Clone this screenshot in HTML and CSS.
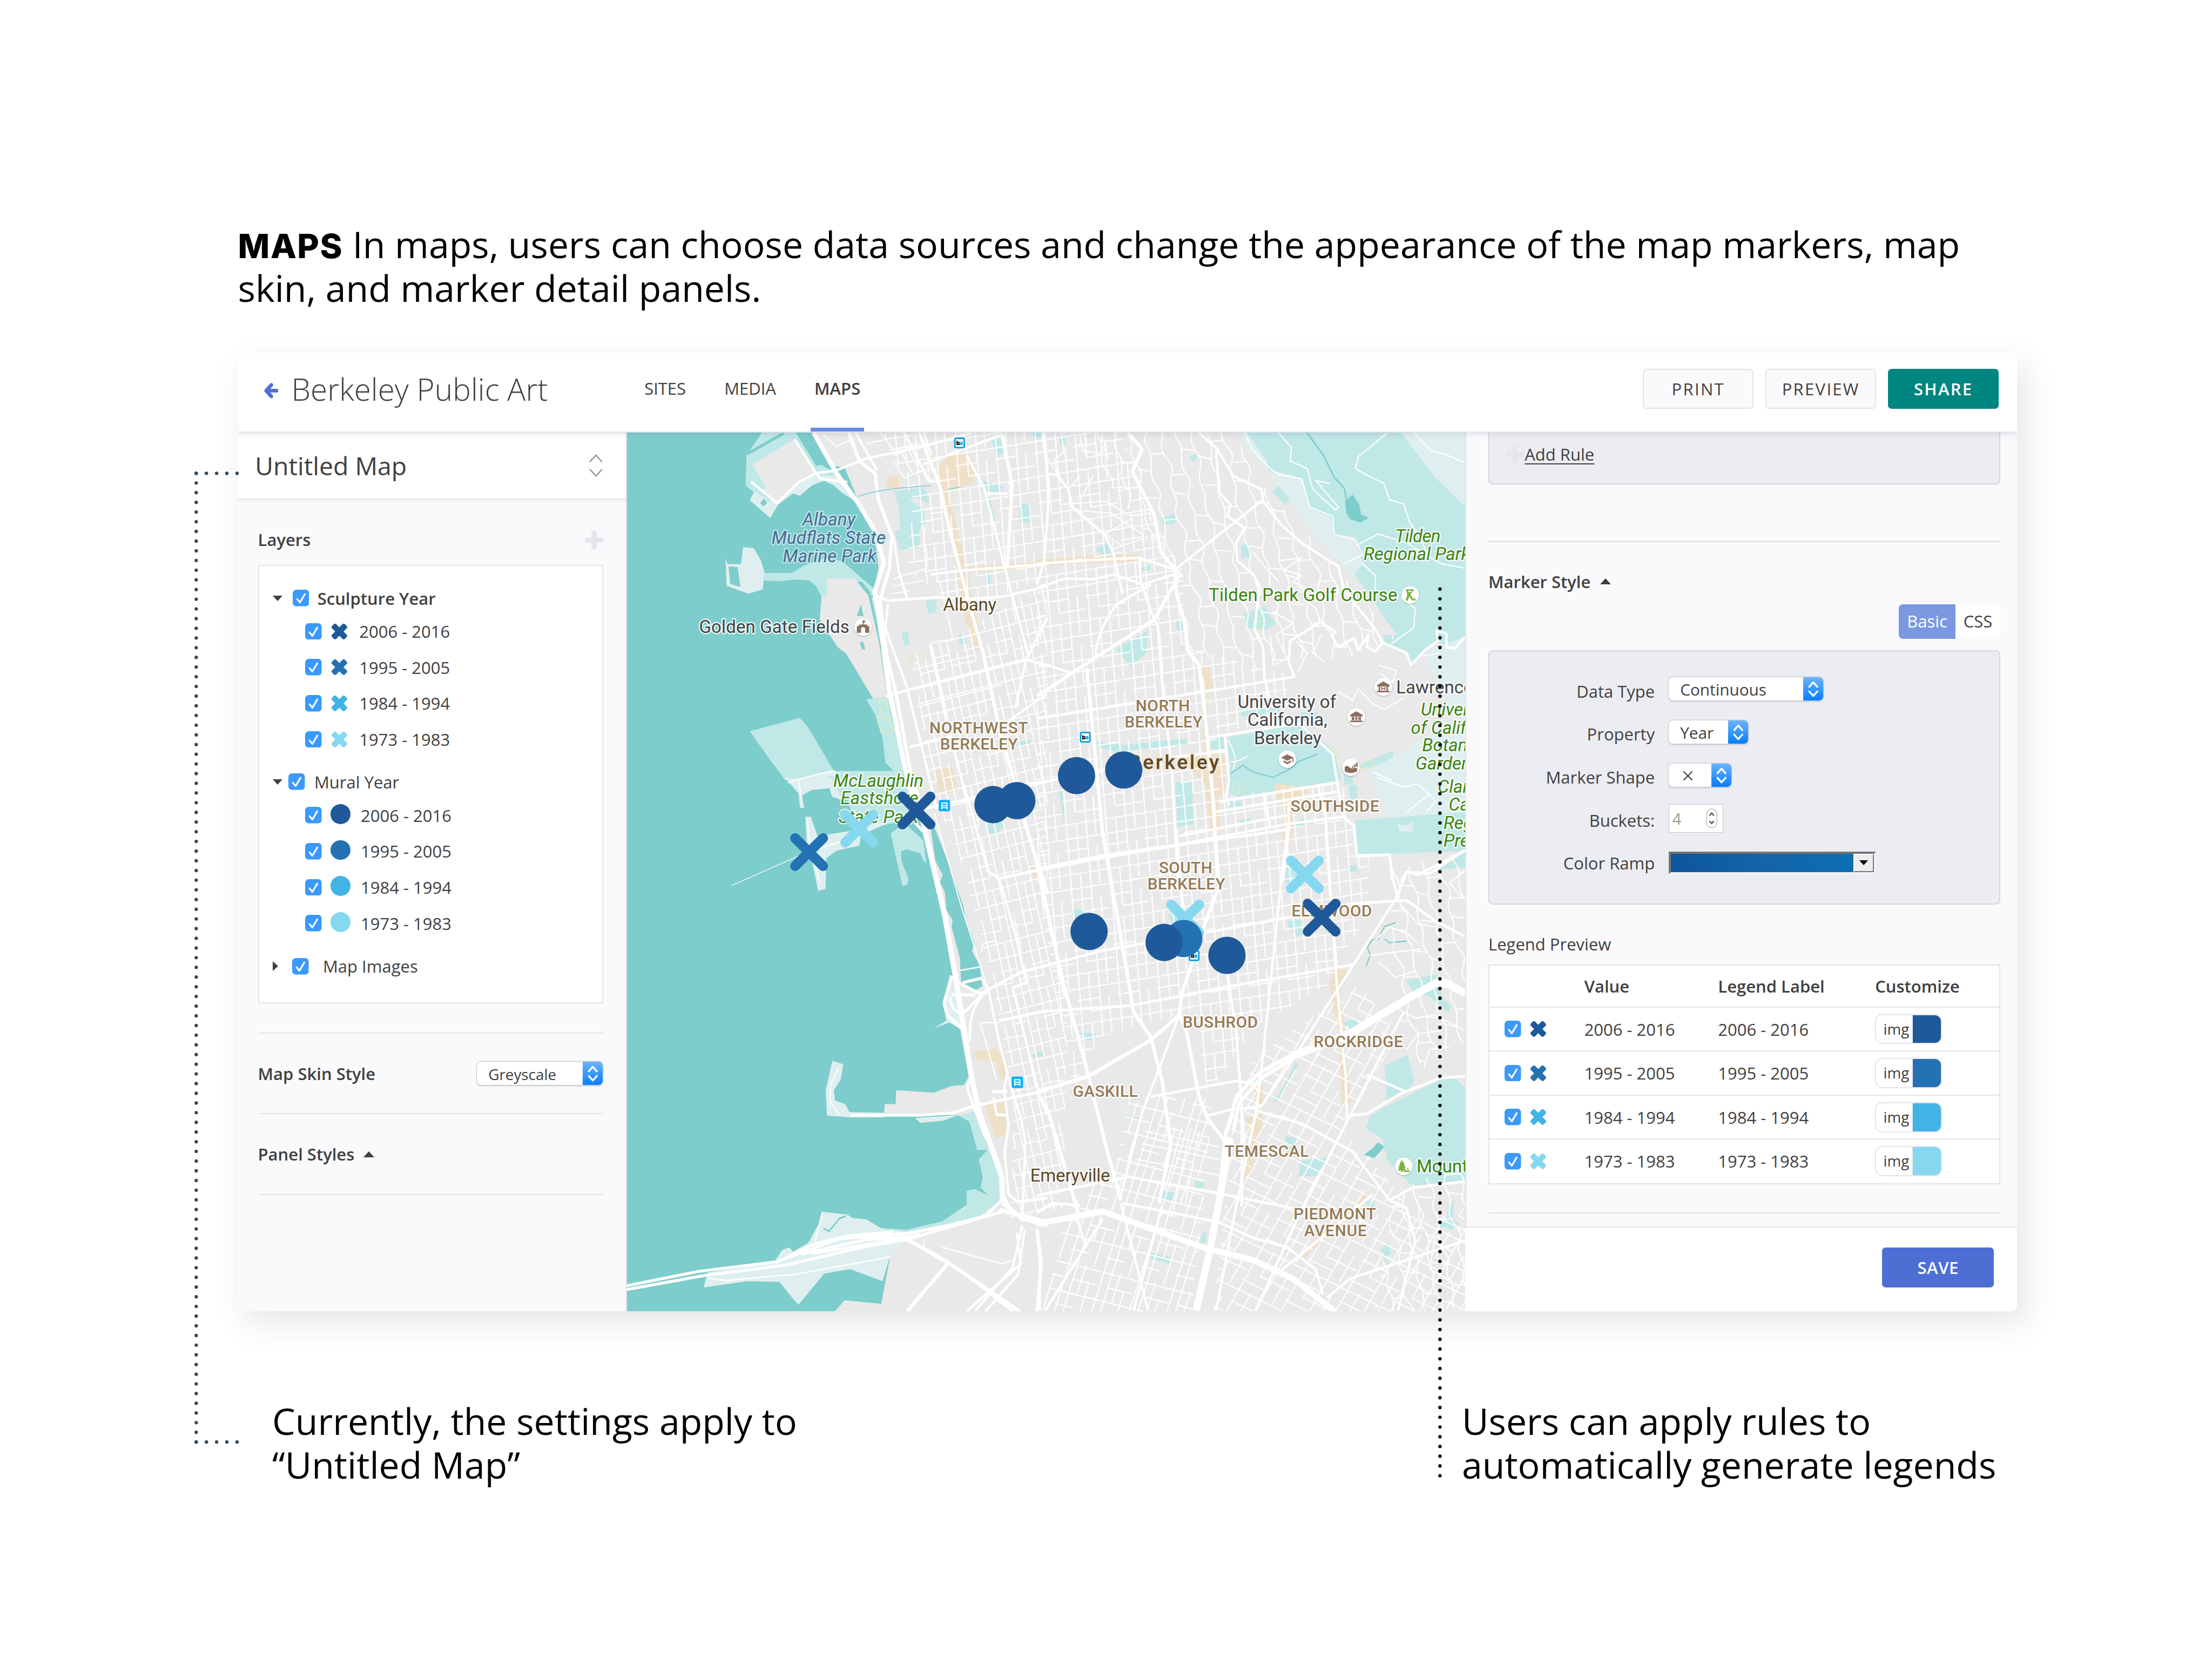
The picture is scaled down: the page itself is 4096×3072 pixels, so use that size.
FILE: index.html
```html
<!DOCTYPE html>
<html lang="en">
<head>
<meta charset="utf-8">
<title>Berkeley Public Art – Maps</title>
<link rel="stylesheet" href="styles.css">
</head>
<body>
<svg class="defs" width="0" height="0" aria-hidden="true">
  <symbol id="check" viewBox="0 0 32 32"><rect width="32" height="32" rx="7" fill="#3b99fc"/><path d="M8.500 18l5.500 6.500L23.500 8.500" fill="none" stroke="#fff" stroke-width="3.300" stroke-linecap="round" stroke-linejoin="round"/></symbol>
  <symbol id="cross" viewBox="0 0 30 30"><g transform="rotate(45 15 15)"><rect x="-2.500" y="9.300" width="35" height="11.400" rx="2.500"/><rect x="9.300" y="-2.500" width="11.400" height="35" rx="2.500"/></g></symbol>
  <symbol id="plus" viewBox="0 0 36 36"><rect y="13" width="36" height="10" rx="3"/><rect x="13" width="10" height="36" rx="3"/></symbol>
  <symbol id="updown" viewBox="0 0 40 46"><path d="M12 19l8-9 8 9M12 28l8 9 8-9" fill="none" stroke="#fff" stroke-width="3.600" stroke-linecap="round" stroke-linejoin="round"/></symbol>
</svg>
<div class="page">
  <p class="intro"><b>MAPS</b> In maps, users can choose data sources and change the appearance of the map markers, map<br>skin, and marker detail panels.</p>

  <div class="window">
    <header class="topbar">
      <svg class="back" viewBox="0 0 28 30"><path d="M14 4L4 15l10 11M5 15h20" fill="none" stroke="#4b6fd6" stroke-width="7" stroke-linecap="round" stroke-linejoin="round"/></svg>
      <h1>Berkeley Public Art</h1>
      <nav class="tabs">
        <a>SITES</a><a>MEDIA</a><a class="active">MAPS</a>
      </nav>
      <div class="actions">
        <button class="btn">PRINT</button><button class="btn">PREVIEW</button><button class="btn share">SHARE</button>
      </div>
    </header>

    <div class="body">
      <aside class="left">
        <div class="map-title"><span>Untitled Map</span>
          <svg viewBox="0 0 28 44"><path d="M2 15L14 2l12 13M2 29l12 13 12-13" fill="none" stroke="#9a9a9e" stroke-width="2.600"/></svg>
        </div>
        <div class="left-in">
          <div class="layers-head"><b>Layers</b><svg class="plus"><use href="#plus"/></svg></div>
          <div class="tree">
            <div class="node first"><i class="down"></i><svg class="ck"><use href="#check"/></svg><b>Sculpture Year</b></div>
            <div class="leaf"><svg class="ck"><use href="#check"/></svg><svg class="x c1"><use href="#cross"/></svg><span>2006 - 2016</span></div>
            <div class="leaf"><svg class="ck"><use href="#check"/></svg><svg class="x c2"><use href="#cross"/></svg><span>1995 - 2005</span></div>
            <div class="leaf"><svg class="ck"><use href="#check"/></svg><svg class="x c3"><use href="#cross"/></svg><span>1984 - 1994</span></div>
            <div class="leaf"><svg class="ck"><use href="#check"/></svg><svg class="x c4"><use href="#cross"/></svg><span>1973 - 1983</span></div>
            <div class="node mural"><i class="down"></i><svg class="ck"><use href="#check"/></svg><span>Mural Year</span></div>
            <div class="leaf"><svg class="ck"><use href="#check"/></svg><em class="dot d1"></em><span>2006 - 2016</span></div>
            <div class="leaf"><svg class="ck"><use href="#check"/></svg><em class="dot d2"></em><span>1995 - 2005</span></div>
            <div class="leaf"><svg class="ck"><use href="#check"/></svg><em class="dot d3"></em><span>1984 - 1994</span></div>
            <div class="leaf"><svg class="ck"><use href="#check"/></svg><em class="dot d4"></em><span>1973 - 1983</span></div>
            <div class="node images"><i class="right-caret"></i><svg class="ck"><use href="#check"/></svg><span>Map Images</span></div>
          </div>
          <div class="setting skin"><b>Map Skin Style</b><div class="select grey"><span>Greyscale</span><svg><use href="#updown"/></svg></div></div>
          <div class="setting"><b>Panel Styles</b><i class="up"></i></div>
          <div class="rule"></div>
        </div>
      </aside>

      <main class="map">
        <svg viewBox="1209 834 1617 1695" preserveAspectRatio="none">
          <defs>
            <pattern id="g1" width="62" height="104" patternUnits="userSpaceOnUse" patternTransform="matrix(.97 -.25 .21 .97 0 0)"><path d="M4 0V104M19 0V52M19 78V104M33 0V104M48 26V104M0 3H62M0 29H33M33 52H62M0 78H62M0 54H20"/></pattern>
            <pattern id="g2" width="76" height="96" patternUnits="userSpaceOnUse" patternTransform="matrix(1 -.16 .08 1 0 0)"><path d="M5 0V96M24 0V50M24 72V96M43 0V96M60 24V96M0 4H76M0 26H43M24 50H76M0 72H76"/></pattern>
            <pattern id="g3" width="70" height="110" patternUnits="userSpaceOnUse" patternTransform="matrix(.96 .24 -.3 .95 0 0)"><path d="M4 0V110M20 0V110M36 0V60M52 30V110M0 5H70M0 60H70M20 32H70M0 86H36"/></pattern>
            <pattern id="g4" width="96" height="90" patternUnits="userSpaceOnUse" patternTransform="matrix(.86 .42 -.5 .88 0 0)"><path d="M5 0V90M30 0V54M55 0V90M78 30V90M0 5H96M0 30H55M30 54H96M0 74H55"/></pattern>
            <pattern id="g5" width="118" height="130" patternUnits="userSpaceOnUse" patternTransform="rotate(-12)"><path d="M8 0C-4 30 30 40 14 66S22 104 8 130M38 0C52 24 28 44 42 70S30 100 38 130M66 0C58 30 84 36 70 66S76 110 66 130M96 0C110 30 84 50 98 78S90 110 96 130M14 66L42 70M70 40L96 52M42 20L66 28M70 96L96 104M38 110L10 100M0 20L8 22M98 18L118 20"/></pattern>
            <clipPath id="mapclip"><rect x="1209" y="834" width="1617" height="1695"/></clipPath>
          </defs>
          <g clip-path="url(#mapclip)">
          <rect class="land" x="1209" y="834" width="1617" height="1695"/>

          <!-- water and shore, north-west -->
          <g transform="translate(1200 660) scale(.52296 .57398)">
            <path class="water" d="M0 300H640L700 303 775 415 820 420 865 520 915 600 938 700 945 760 925 845 955 1040 975 1190 1010 1300 1040 1440 1085 1600H0Z"/>
            <path class="park" d="M515 303H640L715 415 735 412 790 440 820 470 865 530 810 505 780 480 745 465 700 480 655 515 630 508 575 545 545 590 470 530 485 505 455 480 458 380Z"/>
            <path class="pale" d="M790 450L870 540 810 505 780 480 745 465 700 480 655 515 630 508 575 545 545 590 470 530 490 500 540 535 640 480 715 445Z"/>
            <path class="land" d="M635 325L715 440 650 470 570 540 515 495 530 490 480 410Z"/>
            <path d="M595 306L460 375" stroke="#7dcdcc" stroke-width="10" fill="none"/>
            <path class="water" d="M640 303H705L770 405 765 415 730 412Z M508 540l14-15 13 14-14 13Z"/>
            <path class="pale" d="M445 688L485 692 510 730 525 775 518 830 465 845 385 818 380 725 388 745 438 745Z"/>
            <path class="water" d="M392 753L425 755 436 822 398 812Z"/>
            <path class="park" d="M524 775H625L670 750 750 725 810 735 850 765 880 790 925 825 925 850 755 870 735 855 715 820 690 800 640 797 580 803 518 800Z"/>
            <path class="land" d="M755 793H860L910 850 925 860 975 1190 925 1197 825 1045 795 1025 770 990 728 930 735 855H755Z"/>
            <path class="water" d="M880 882L890 920H865Z M876 1010L888 1006 896 1032H885Z M905 840L918 850 958 1040 950 1020Z M865 803L885 806 918 842 905 848Z"/>
            <path class="park" d="M900 1200L975 1190 1045 1440 1085 1600H800L780 1440H1000L970 1412 960 1330 935 1255Z"/>
            <path class="park" d="M470 1307L655 1262 683 1290 780 1440 820 1570H660L655 1535 610 1480 550 1410Z"/>
            <path class="pale" d="M610 1480L725 1450 785 1440 830 1570H660L655 1535Z"/>
            <path class="yel" d="M945 1205L972 1195 990 1265 962 1270ZM938 1258L965 1255 975 1270 1005 1305 955 1312ZM1055 1056L1110 1045 1120 1070 1060 1082Z"/>
            <path class="park" d="M1003 500L1110 488 1133 525 1125 540 1080 520 1060 530 1110 560 1118 612 1098 620 1095 690 1022 698 1005 640 1025 625 1020 560ZM1330 465L1403 482 1400 505 1335 500ZM1345 515L1355 520 1378 610 1370 605ZM1465 545H1510V605H1465ZM1360 330L1395 322 1408 370 1385 385ZM1510 303H1548V318H1520ZM1333 770L1352 768 1362 808 1343 812ZM1120 868L1160 864 1155 908 1128 912ZM1030 975L1052 972 1062 1015 1042 1020ZM1240 985L1255 975 1272 1010 1243 1018ZM1455 1345L1505 1335 1510 1352 1460 1365Z"/>
            <path class="sand" d="M1165 415L1210 375 1260 370 1300 405 1298 470 1215 500 1170 490 1160 440ZM977 450H1021V490H977ZM1090 305L1110 303 1155 400 1135 400ZM1175 490L1197 485 1275 780 1320 980 1310 1040 1300 1040 1255 900 1235 770ZM1250 755L1568 735V755L1255 775ZM1150 1440L1215 1430 1235 1490 1170 1515Z"/>
          </g>

          <!-- bay, marina and bridge approach -->
          <g transform="translate(1200 1500) scale(.52296 .66964)">
            <path class="water" d="M0 0H1070L1100 100 1150 250 1225 560 1185 650 1245 720 1278 860 1260 885 1215 888 1150 907 1010 900 1008 940H968L965 970 1240 972 1280 990 1310 1070H1350L1315 1100 1330 1150 1322 1180 1355 1205 1300 1185 1270 1190 1272 1230 1180 1278 1050 1302 920 1296 850 1270 990 1370 955 1515 820 1505 775 1545H0Z"/>
            <path class="water" d="M1135 130L1155 150 1200 240 1258 370 1268 410 1298 475 1290 500 1318 540 1328 600 1295 615 1250 592 1245 520 1215 430 1218 410 1195 380 1190 330 1172 300 1182 280 1155 240Z"/>
            <path class="park" d="M1240 974L1300 960 1400 1150 1395 1215 1320 1262 1050 1318 900 1320 740 1300 850 1270 930 1296 1050 1302 1180 1278 1270 1235V1190L1300 1185 1355 1207 1322 1180 1332 1150 1315 1100 1350 1072H1308L1282 990Z"/>
            <path class="park" d="M760 -5H1070L1100 95 1000 130 870 152 830 62H800L770 50Z"/>
            <path class="pale" d="M590 0H770L810 62 775 55 765 30 700 35 663 50 671 88 655 85 650 45 612 10ZM675 112H695L720 168 840 153 880 140 1010 120 880 165 875 195 790 210 752 232 750 320 722 326 700 240 680 190Z"/>
            <path class="park" d="M990 160L1040 130 1110 180 1122 247 1108 235 1100 218 1050 206 1028 212 1030 240 1055 290 1052 308 1033 311Z"/>
            <path class="pale" d="M1215 575L1255 700 1245 722 1205 705 1148 722 1195 700 1185 650ZM755 973L750 900 775 815 815 825 805 870 780 900 785 930 822 940 838 963 965 965V978H840ZM1080 980L1240 972 1180 988 1100 994Z"/>
            <path class="pale" d="M735 1250L830 1258 850 1268 900 1272 960 1300 1050 1308 1050 1330 990 1370 960 1450 840 1415 745 1428 650 1518 632 1503 580 1452 460 1450 300 1468 315 1425 560 1395 590 1360 615 1353 630 1365 685 1340 725 1285Z"/>
            <path d="M742 1298L763 1306 800 1270 825 1262" stroke="#7dcdcc" stroke-width="5" fill="none"/>
            <path class="sand" d="M1160 0H1215L1235 40 1200 45ZM1295 790L1380 778 1408 815 1415 870 1395 870 1378 820 1310 810ZM1335 945L1410 925 1418 1030 1375 1038ZM1505 258L1535 252V285L1520 290Z"/>
            <path class="park" d="M1345 135L1405 122 1408 138 1380 162 1352 160ZM1510 798L1555 788V800L1515 806Z"/>
          </g>

          <!-- hills and campus -->
          <g transform="translate(2000 800) scale(.54847 .57398)">
            <path class="pale" d="M690 50L900 120 1000 300 1160 500 1120 550 1070 500 1000 430 900 300 800 170Z"/>
            <path class="park" d="M735 55H1505V745L1470 785 1410 765 1365 795 1315 842 1300 800 1225 768 1217 740H1265L1117 535 1145 500 1120 410 1045 405 1035 345 960 310 935 215 850 190 815 188 805 150Z"/>
            <path class="park" d="M828 258L848 238 888 280 872 303Z"/>
            <path class="pale" d="M1275 55H1505V308L1400 210ZM1365 810L1410 780 1505 745V1010H1470L1400 880ZM1170 1190L1290 1130 1505 1000V1345H1240L1210 1300Z"/>
            <path class="water" d="M1083 290L1110 268 1133 300 1140 335 1167 346 1138 362 1100 350 1088 330Z"/>
            <path d="M950 60L1010 140 1045 210 1080 245 1090 290" stroke="#7dcdcc" stroke-width="5" fill="none"/>
            <path class="park" d="M1120 1362L1505 1335V1465L1125 1480ZM668 1085L860 1050 940 1045 1045 1130 1072 1232 720 1290 675 1270 680 1180ZM1115 1185L1195 1150 1253 1128V1150L1180 1185ZM610 1085L655 1078 660 1122 612 1125ZM485 1235L545 1228 550 1375 495 1385ZM278 785L390 725 385 800 328 846ZM205 455L255 425 265 465 240 475ZM728 668L800 643 840 700 808 722 740 715ZM440 345L492 330 485 365 438 370ZM210 1098L300 1110 490 1090 525 1090V1105L280 1132 215 1118ZM362 515L400 505V520L370 525ZM490 690L515 687V730H493ZM716 437L745 433 748 478 720 482ZM536 140L560 130 565 143 548 158ZM75 1262H92L97 1380ZM78 70H98V102H80Z"/>
            <path class="park" d="M715 990L850 985 860 1005 720 1012ZM925 1000L990 1000 985 1030 935 1030ZM675 1298L720 1300V1315L680 1320ZM1080 1210H1110V1240H1080ZM1095 1245L1125 1242V1290H1100ZM712 1362L750 1355V1375H715ZM890 1375L940 1355V1380L895 1395ZM875 1490H920V1560H870Z"/>
            <path class="pale" d="M1268 1375L1300 1380 1322 1365V1400H1275Z"/>
            <path class="yel" d="M690 1240L710 1237 715 1268 693 1272ZM770 695L797 692V708L780 722 768 715ZM1140 1170L1175 1160 1187 1178 1150 1195ZM1030 1122H1065L1055 1155Z"/>
            <path d="M680 1205L725 1178 760 1200 830 1218 890 1190 920 1165 985 1140" stroke="#7dcdcc" stroke-width="4" fill="none"/>
            <path class="sand" d="M580 840L605 845 620 915 598 935 605 1135 660 1140V1270L635 1280 645 1400H608L590 1240 540 1190 520 1150 585 1130ZM835 1242L858 1240 920 1250 955 1262 930 1290 895 1300 900 1400 880 1460H862L870 1320 845 1300ZM0 487L240 468 360 470V492L240 495 0 508Z"/>
          </g>

          <!-- Rockridge and Piedmont -->
          <g transform="translate(2000 1600) scale(.54847 .60587)">
            <path class="park" d="M1230 880L1420 795 1470 792 1505 820V1120L1320 1135 1230 1050 1215 985 1155 950 1172 910ZM1222 752L1303 717 1328 800 1300 835 1230 865ZM925 1055L1022 1042 990 1102 920 1105ZM872 975L920 985 900 1030 880 1028ZM1300 480L1410 460 1405 480 1430 540 1458 562 1447 582 1380 530 1320 515ZM1075 615L1125 600 1130 620 1080 645ZM440 1150L486 1157 480 1182 437 1175ZM400 1345L471 1362 468 1382 395 1365ZM1208 1335L1235 1315 1247 1350 1225 1362 1248 1400 1235 1397ZM1400 1265L1440 1240 1445 1200 1468 1180 1460 1240 1487 1255 1455 1275 1430 1265ZM880 290L935 287 945 330 915 340 885 310ZM870 115H925V170H870ZM150 645L208 650 205 665 175 672ZM1095 115L1125 113V133H1098ZM1385 130L1505 65V120ZM125 255H168V285H130ZM310 910L370 920V925L320 918ZM0 708L22 705 25 718 0 725ZM570 1310L595 1270V1310L580 1320ZM1155 1180L1185 1185V1205L1165 1200ZM555 1118L590 1125 585 1140H555ZM460 270H500V300H475Z"/>
            <path class="water" d="M1150 1035L1180 1015 1200 995 1222 1010 1185 1046Z"/>
            <path d="M1157 435L1172 400 1162 375 1178 352 1200 348 1222 308 1262 296M1222 348L1240 360 1300 355" stroke="#7dcdcc" stroke-width="4" fill="none"/>
            <path d="M835 865L870 825 890 790 912 745" stroke="#c0e8e7" stroke-width="12" fill="none"/>
            <path class="sand" d="M1040 435L1095 452 1060 520 1085 640 1060 640 1042 570 1030 500ZM1062 700H1085L1105 870 1075 885ZM740 818L795 812 792 950 765 1000 755 1110H710L750 985 730 918 770 910V840ZM862 0H890L885 60H865ZM1160 1155L1180 1160 1060 1270 1000 1310 940 1365 935 1355 990 1295 1040 1260Z"/>
          </g>

          <!-- minor street grids -->
          <g class="grids">
            <path fill="url(#g1)" d="M1760 1260L1840 1230 2020 1120V1700L2060 1900 2050 2330 1950 2350 1955 2130 1915 1900 1860 1680 1790 1500Z"/>
            <path fill="url(#g2)" d="M1700 834H2160L2230 1010 2280 1100 2290 1250 2480 1300 2485 1385 2365 1410 2375 1535 2585 1505 2610 1580V1650H2640V1760L2560 1900 2420 1980 2330 2110 2300 1950 2120 2000 2070 2100 2000 1700V1120L1860 1180 1750 1100 1760 960Z"/>
            <path fill="url(#g3)" d="M2180 2110L2340 2120 2300 2529H2010L2060 2330 2150 2250Z"/>
            <path fill="url(#g4)" d="M2420 2040L2620 1900 2700 1990 2590 2180 2640 2230 2740 2360 2826 2330V2529H2340L2370 2250 2380 2110Z"/>
            <path fill="url(#g5)" d="M2060 834H2380L2440 940 2520 1030 2590 1110 2690 1230 2600 1270 2480 1270 2400 1300 2290 1250 2270 1100Z M2680 1680L2826 1640V2010L2720 2060 2690 1900Z M2690 2300L2826 2240V2529H2650Z"/>
          </g>

          <!-- arterials -->
          <g class="roads" transform="translate(1200 660) scale(.52296 .57398)">
            <path class="w16" d="M705 303L790 440 870 540 935 640 965 740 930 840 960 1000 985 1170 1040 1420 1085 1580"/>
            <path class="w11" d="M835 303L875 400 932 440 945 530 995 650 985 760 950 870 975 1050 1010 1180 1050 1380 1090 1568M1095 303L1170 480 1210 640 1280 880 1330 1040 1390 1290 1450 1490M1400 310L1438 480 1420 755"/>
            <path class="w8" d="M860 303L940 430M1000 650L1020 770 1050 860M635 325L715 440 790 430 900 390 1110 350 1290 303M715 440L730 458 830 470M650 470L570 540 475 468M715 440L650 470M1110 410L1240 365 1400 310M1040 303L1130 465H1150M1140 780L1240 768 1568 745M925 845L980 868 1160 857 1280 862 1400 855 1568 820M970 1190L1170 1140 1490 1065 1568 1090M980 880L970 960 1050 1160 1110 1380 1160 1568M1135 1015L1200 1290 1270 1530M1270 380L1335 490 1420 790 1500 1060M1568 1180L1420 1275M1568 925L1490 1065 1450 1230M1060 1360L1210 1325M1450 1490L1568 1475M1110 300L1140 380M1335 508H1420"/>
            <path class="w4" d="M1135 1015C1170 995 1215 1010 1218 990L1200 920 1170 800M1135 575L1180 570M1120 620C1100 680 1140 720 1120 760L1000 795M1000 820L1110 800M1000 845L1060 835M950 303L1000 360 1090 340M900 340L980 325M1000 380L1060 360M1000 400L1040 455 1110 430M1030 370L1070 440M1055 360L1090 420M740 310L790 350 860 320M610 1480L725 1450 785 1440M650 1470L660 1530M1070 1100L1300 1050M1090 1225L1400 1150M1100 1260L1340 1205"/>
            <path d="M870 518Q950 490 1140 482M1200 495L1248 485" stroke="#7dcdcc" stroke-width="3"/>
          </g>
          <g class="roads" transform="translate(1200 1500) scale(.52296 .66964)">
            <path class="w18" d="M1070 0L1110 130 1190 400 1235 600 1285 850 1315 960 1400 1150 1402 1220"/>
            <path class="w8" d="M17 1463L280 1422 570 1394 800 1328 1050 1312 1200 1290 1340 1262 1402 1215M17 1474L300 1434 600 1404 900 1350 1050 1330 1400 1250M660 1372L900 1330 1050 1322M570 1396L700 1345 830 1320 1000 1308M700 1370L900 1345 1100 1315"/>
            <path class="w11" d="M1040 1325L1200 1395 1470 1540M1400 1225L1480 1270 1568 1290M1390 1245L1480 1262 1568 1280M1400 1200L1430 1240 1480 1275M1200 1400L1050 1537M1480 120L1568 330M1530 1300L1545 1400 1530 1537M1215 570L1187 650 1200 685 1250 720"/>
            <path class="w8" d="M1240 590L1320 622 1350 610 1470 560 1568 540M1255 590L1325 577 1350 610 1390 760 1430 880 1470 980 1487 1050 1475 1270M1110 90L1568 10M1080 130L1110 155M1260 20L1350 270 1390 290 1450 450 1490 590 1440 605 1540 920 1568 970M1390 290L1568 260M1390 700L1568 670M840 972H1100L1220 965 1300 945 1568 900M1420 850L1408 900 1425 1000 1410 1080 1425 1200 1460 1222 1568 1210M1280 870L1272 895 1340 1040M1300 945L1395 1145M1350 610C1280 660 1285 700 1280 760M1215 625H1300M1210 630C1205 660 1240 690 1270 670L1330 620"/>
            <path class="w8" d="M1455 1310L1470 1400 1270 1537M1475 1290L1440 1410 1300 1537M1485 1300L1460 1430 1340 1537M1300 1450L1440 1537M1365 905L1420 903M1370 920L1380 970 1415 972"/>
            <path class="w4" d="M1150 100L1250 370 1350 610M1245 555L1318 545M1325 500L1330 478 1380 468M1320 705L1380 870M1320 705H1390M797 838L770 880 765 930 800 970M683 120L690 190 730 305M720 205L860 170M735 1260L725 1290 710 1340M318 1442L380 1448 640 1430 990 1380M1180 1352L1400 1400 1440 1390M1110 1330L1115 1360"/>
            <path d="M404 310L650 225" stroke-width="2"/>
          </g>
          <g class="roads" transform="translate(2000 800) scale(.54847 .57398)">
            <path class="w11" d="M320 60L370 115 335 190 370 255 410 330 425 400 435 460 485 520 490 600 515 680 530 790 570 840 590 1000 620 1300 635 1568M0 945L215 810 410 690 500 540M175 850L190 1000 230 1400 260 1568"/>
            <path class="w8" d="M20 60L35 180 40 300 25 490 0 570M30 195L75 205 110 250 125 310 240 405 270 470 300 600M485 520L795 285M570 60L630 110 690 205 790 250 795 290 860 370 930 430 1060 510 1080 590 1190 720 1215 765 1300 800 1315 840 1365 790 1410 760 1405 725 1440 735 1440 780 1470 785 1505 745M630 120L640 260 680 300 670 340 730 380 700 430 705 490 765 540 780 590 765 720 795 780 800 880 815 950M0 500L240 485 360 480 485 520 510 540 485 550M0 580L100 550 200 552 270 535 370 570 485 535M360 480L365 560 400 660 425 710 440 900 475 1200 495 1568M205 800C220 720 260 640 310 620L400 570M205 800L215 815M0 830L130 870M0 1020L330 970 620 925 905 880 885 830 890 760 990 700 970 705M990 690L1050 730 1035 740 1060 780 1115 750 1130 790 1165 740 1160 780 1190 795 1215 765M600 1085L700 1070 920 1035 1040 1140 1075 1350 1115 1380 1125 1480 1240 1478 1250 1568M940 1030L925 1040M0 1240L80 1222 480 1150 660 1130M660 1075L675 1230 665 1280 675 1310M640 1300L1060 1235M620 1335L1060 1265M0 1525L230 1480 490 1445 880 1375 1080 1350M500 1415L880 1345M800 1275L820 1390M885 1300V1400L865 1568M990 1250L1015 1350 1030 1568M1280 1568L1300 1535 1340 1545 1505 1465"/>
            <path class="w4" d="M730 60L760 120 820 180 850 200 930 215 960 310 1040 340 1045 400 1120 420 1145 470 1080 500M850 60L895 110 890 155 950 180 970 250 1050 320 1060 310 980 220 1030 230M1230 62L1130 140 1120 180 1155 200 1220 230 1240 285 1290 300 1310 360 1340 400 1370 460M1325 60L1385 120 1430 130 1505 160M1120 440L1200 400 1300 430 1420 500 1505 515M1140 495L1190 540 1190 590M1245 770L1325 715 1330 650 1280 615M1200 840L1265 860 1250 900 1210 870M1130 920L1180 970 1220 990 1290 950M1060 930L1110 960 1130 920M910 760L950 800 920 860M1000 740L970 800 1010 830M680 1165C700 1170 735 1150 740 1145M670 1090C700 1140 700 1160 690 1190M1200 1220L1290 1250 1340 1240 1380 1275 1300 1335M1180 1200L1250 1230M1350 810L1420 800M1380 1270L1400 1300 1370 1335"/>
            <path class="w4" d="M85 60L95 125 60 150 75 205M150 62L160 120 225 130 230 65M240 90L250 150M40 150L75 205M150 205L120 240M200 200L150 290M90 300L240 290 330 340 400 330M130 320L260 330 370 400M180 360L300 440M240 400L330 350M270 450L390 410M830 660L900 700 840 740 870 800M820 740L830 840 880 820M940 620L980 650 1000 700M850 490L930 480 870 520 930 540 900 560 980 600M760 460L800 510 850 560"/>
          </g>
          <g class="roads" transform="translate(2000 1600) scale(.54847 .60587)">
            <path class="w26" d="M1505 520L1420 480 1300 540 1100 650 900 720"/>
            <path class="w11" d="M900 715L780 775 700 850 670 960M900 728L790 790 710 870 690 960M690 900L665 960 640 1160 610 1330 560 1530"/>
            <path class="w26" d="M680 980L645 1160 610 1330 560 1530"/>
            <path class="w18" d="M0 1255L230 1215 400 1270 600 1335 760 1370 900 1430 1050 1535"/>
            <path class="w11" d="M0 110L90 480 180 780 240 1000 295 1180M230 0L250 110 300 370 340 580 400 660 440 800 470 1000 430 1190M625 0L640 180 590 300 510 520 500 590 400 670 180 785 0 835M500 590L525 640 570 850 600 920 660 990M0 835L40 900 110 1110 150 1240"/>
            <path class="w8" d="M0 130L230 90 490 50 880 0M0 440L230 385 640 320 1000 260 1110 235 1300 225 1400 290 1505 340M0 580L330 560 700 495 1110 430M490 0L515 260M660 400L700 640 730 1000M880 0L860 150 790 760 770 900 700 1200 630 1530M1015 0L1055 500 1085 780 1090 920M1505 65L1380 140 1300 135 1265 215 1120 420 900 730M1240 80L1250 150 1268 215M1115 0L1125 85 1240 80M600 910L690 890 760 885 790 900 930 935 1110 1025 1240 1180 1300 1205 1330 1310 1270 1530M720 890L790 880 900 730M1290 580L1090 930 920 1230 770 1530M1100 910L1160 905 1280 840 1420 790 1505 785M1160 780L1300 835M320 1105L620 1155 900 1205M0 1165L320 1105M0 1220L50 1190 150 1195M300 1190L450 1215 640 1250 760 1300 880 1330 980 1400 1005 1480M290 1180L370 900 430 760 500 590M295 1190L390 1530M230 1240L30 1530M140 1240L170 1320M850 1410L1080 1240 1180 1160M1020 1490L1100 1430 1500 1310M1240 1180L1320 1140 1505 1120M400 850L700 800 780 810M440 1200L340 1530M720 1200L720 890M0 1300C20 1400 5 1450 10 1530"/>
            <path class="w4" d="M570 960L520 1200M540 950L480 1210M510 945L450 1150M380 960L640 1010M370 1000L640 1050M350 1050L640 1100M1170 400L1350 380M1180 360L1240 310 1300 330 1340 360M1200 420L1260 470 1330 450M1505 130L1450 170 1500 220M1280 240L1340 300 1400 310M1250 560L1330 600 1400 590 1505 640M1300 700L1340 650 1420 640M1360 760L1380 700 1450 690M1320 1150L1360 1230 1330 1290M1400 1300L1380 1400 1480 1450"/>
          </g>

          <!-- place names -->
          <g class="lbl it marine" text-anchor="middle"><text x="1598.500" y="1013" textLength="102">Albany</text><text x="1598" y="1049" textLength="220">Mudflats State</text><text x="1600" y="1083.600" textLength="181">Marine Park</text></g>
          <g class="lbl it green" text-anchor="middle"><text x="1694" y="1517" textLength="174">McLaughlin</text><text x="1696" y="1551" textLength="150">Eastshore</text><text x="1694" y="1587" textLength="154">State Park</text><text x="2734.500" y="1045" textLength="88">Tilden</text></g>
          <g class="lbl it green"><text x="2630" y="1079.500">Regional Park</text><text x="2740" y="1380">University</text><text x="2721" y="1415">of California</text><text x="2743" y="1449">Botanical</text><text x="2730" y="1484">Garden</text><text x="2773" y="1529">Claremont</text><text x="2794" y="1563.500">Canyon</text><text x="2784" y="1598.500">Regional</text><text x="2784" y="1633">Preserve</text></g>
          <g class="lbl green"><text x="2331" y="1158.700" textLength="364">Tilden Park Golf Course</text><text x="2732" y="2261.600">Mountain</text></g>
          <g class="lbl poi"><text x="1348" y="1220" textLength="290">Golden Gate Fields</text><text x="2387" y="1365" textLength="190">University of</text><text x="2406" y="1400" textLength="154">California,</text><text x="2418.500" y="1435" textLength="130">Berkeley</text><text x="2692.700" y="1337">Lawrence</text></g>
          <g class="lbl town"><text x="1818.700" y="1178" textLength="103">Albany</text><text x="1987" y="2278.600" textLength="154">Emeryville</text><text class="city" x="2176" y="1483" textLength="175">Berkeley</text></g>
          <g class="lbl hood"><text x="1792.500" y="1414" textLength="190">NORTHWEST</text><text x="1813" y="1446" textLength="150">BERKELEY</text><text x="2190" y="1371.700" textLength="105">NORTH</text><text x="2169" y="1403" textLength="150">BERKELEY</text><text x="2489" y="1565" textLength="171">SOUTHSIDE</text><text x="2235" y="1683.600" textLength="103">SOUTH</text><text x="2213" y="1715.700" textLength="150">BERKELEY</text><text x="2491" y="1767.800" textLength="155">ELMWOOD</text><text x="2281" y="1982" textLength="145">BUSHROD</text><text x="2533.700" y="2020" textLength="172">ROCKRIDGE</text><text x="2069" y="2115.600" textLength="125">GASKILL</text><text x="2362" y="2230.700" textLength="162">TEMESCAL</text><text x="2494.700" y="2352" textLength="159">PIEDMONT</text><text x="2515" y="2384.600" textLength="121">AVENUE</text></g>

          <!-- place icons -->
          <g fill="#8d6e63">
            <g transform="translate(1664.400 1209.300)"><circle class="disc" r="17"/><path d="M-12 11V-2H-8V-5H-1V-13H4V-9H1V-5H8V-2H12V11H4V4A4 4 0 0 0-4 4V11Z"/></g>
            <g transform="translate(2668 1325)"><circle class="disc" r="17"/><path d="M-12-4L0-11 12-4V-1H9V7H12V10H-12V7H-9V-1H-12ZM-6-1V7H6V-1ZM-4 0H-2V2H2V0H4V6H2V4H-2V6H-4Z" fill-rule="evenodd"/></g>
            <g transform="translate(2616 1382.600)"><circle class="disc" r="17"/><path d="M-12-4L0-11 12-4V-1H-12ZM-9 0H-4V6H-9ZM-2 0H2V6H-2ZM4 0H9V6H4ZM-12 7H12V10H-12Z"/></g>
            <g transform="translate(2482.700 1464)"><circle class="disc" r="17"/><path d="M-12-3L0-9 12-3V6H10V-2L0 3ZM-7 2L0 6 7 2V6L0 10-7 6Z"/></g>
            <g transform="translate(2605.500 1479.600)"><circle class="disc" r="17"/><path d="M-12 0A5 5 0 0 1-4-1L0 2 12 1V8Q0 14-12 8ZM2-2H5V1H2ZM6-6H9V0H6ZM10-9H13V-1H10Z"/></g>
          </g>
          <g fill="#7cb342">
            <g transform="translate(2720 1147.300)"><circle class="disc" r="17"/><path d="M-9-11H7V-8H-5L-2-5 6-9 0-1 7 10H3L-2 3-5 11H-9L-6 0-7-6ZM6 7h4v4H6Z"/></g>
            <g transform="translate(2707.500 2249.500)"><circle class="disc" r="17"/><path d="M-4-12L2-4H0L4 2H1L5 8H-2V11H-5V8H-12L-8 2H-11L-7-4H-9ZM0 8.500H12V11H0ZM7 3H9V9H7Z"/></g>
          </g>
          <g id="stops">
            <g transform="translate(1821.300 1553.600)"><rect class="bus" x="-11" y="-11" width="22" height="22" rx="3"/><path class="busline" d="M-5-5H5V4H-5ZM-4 4L-6 7M4 4L6 7M-5 0H5"/></g>
            <g transform="translate(1962 2087.300)"><rect class="bus" x="-11" y="-11" width="22" height="22" rx="3"/><path class="busline" d="M-5-5H5V4H-5ZM-4 4L-6 7M4 4L6 7M-5 0H5"/></g>
            <g transform="translate(1850.600 854)"><rect class="bart" x="-9" y="-9" width="18" height="18" rx="2.500"/><path class="b" d="M-5-4V3H-1V-1H-5"/><path class="a" d="M2-1H5V3H2Z"/></g>
            <g transform="translate(2093 1421.600)"><rect class="bart" x="-9" y="-9" width="18" height="18" rx="2.500"/><path class="b" d="M-5-4V3H-1V-1H-5"/><path class="a" d="M2-1H5V3H2Z"/></g>
            <g transform="translate(2303 1843)"><rect class="bart" x="-9" y="-9" width="18" height="18" rx="2.500"/><path class="b" d="M-5-4V3H-1V-1H-5"/><path class="a" d="M2-1H5V3H2Z"/></g>
          </g>

          <!-- data markers -->
          <g fill="none" stroke-width="19" stroke-linecap="round">
            <path stroke="#86d8f0" d="M1630 1571l54 54m0-54l-54 54M2489.700 1659.600l54 54m0-54l-54 54M2258.800 1744.500l54 54m0-54l-54 54"/>
            <path stroke="#2471b3" d="M1533.300 1616.300l54 54m0-54l-54 54"/>
            <path stroke="#1f5999" d="M1740.400 1536l54 54m0-54l-54 54M2522 1742.600l54 54m0-54l-54 54"/>
          </g>
          <circle cx="2283" cy="1810" r="36" fill="#2471b3"/>
          <g fill="#1f5999"><circle cx="1915" cy="1551.600" r="36"/><circle cx="1961" cy="1544" r="36"/><circle cx="2076.200" cy="1495.700" r="36"/><circle cx="2167.300" cy="1484.800" r="36"/><circle cx="2100.400" cy="1796.300" r="36"/><circle cx="2245.200" cy="1817.500" r="36"/><circle cx="2366.400" cy="1842.400" r="36"/></g>
          </g>
        </svg>
      </main>

      <aside class="right">
        <div class="scroll">
          <div class="card rules"><svg class="plus"><use href="#plus"/></svg><u>Add Rule</u></div>
          <div class="rule"></div>
          <div class="style-head"><b>Marker Style</b><i class="up"></i></div>
          <div class="toggle"><span class="on">Basic</span><span>CSS</span></div>
          <div class="card form">
            <label>Data Type</label><div class="select w1"><span>Continuous</span><svg><use href="#updown"/></svg></div>
            <label>Property</label><div class="select w2"><span>Year</span><svg><use href="#updown"/></svg></div>
            <label>Marker Shape</label><div class="select w3"><span><svg class="thin" viewBox="0 0 20 20"><path d="M1.500 1.500l17 17m0-17l-17 17" stroke="#404040" stroke-width="2.200"/></svg></span><svg><use href="#updown"/></svg></div>
            <label>Buckets:</label><div class="number"><span>4</span><svg viewBox="0 0 22 38"><rect x="1" y="1" width="20" height="36" rx="10" fill="#fff" stroke="#bbb" stroke-width="1.500"/><path d="M6.500 14l4.500-5 4.500 5M6.500 24l4.500 5 4.500-5" fill="none" stroke="#555" stroke-width="2.500"/></svg></div>
            <label>Color Ramp</label><div class="ramp"><div class="bar"></div><div class="drop"><i></i></div></div>
          </div>
          <div class="legend-title">Legend Preview</div>
          <div class="legend">
            <div class="lr lh"><span></span><span></span><b>Value</b><b>Legend Label</b><b>Customize</b></div>
            <div class="lr"><svg class="ck"><use href="#check"/></svg><svg class="x c1"><use href="#cross"/></svg><span>2006 - 2016</span><span>2006 - 2016</span><div class="pill"><span>img</span><em class="d1"></em></div></div>
            <div class="lr"><svg class="ck"><use href="#check"/></svg><svg class="x c2"><use href="#cross"/></svg><span>1995 - 2005</span><span>1995 - 2005</span><div class="pill"><span>img</span><em class="d2"></em></div></div>
            <div class="lr"><svg class="ck"><use href="#check"/></svg><svg class="x c3"><use href="#cross"/></svg><span>1984 - 1994</span><span>1984 - 1994</span><div class="pill"><span>img</span><em class="d3"></em></div></div>
            <div class="lr"><svg class="ck"><use href="#check"/></svg><svg class="x c4"><use href="#cross"/></svg><span>1973 - 1983</span><span>1973 - 1983</span><div class="pill"><span>img</span><em class="d4"></em></div></div>
          </div>
          <div class="rule last"></div>
        </div>
        <footer class="save-bar"><button class="btn save">SAVE</button></footer>
      </aside>
    </div>
  </div>

  <div class="captions">
    <p>Currently, the settings apply to<br>“Untitled Map”</p>
    <p>Users can apply rules to<br>automatically generate legends</p>
  </div>

  <svg class="callouts" viewBox="0 0 4267 3200">
    <g fill="none" stroke-width="6.600" stroke-linecap="round">
      <path d="M378.500 913V2782" stroke="#35475f" stroke-dasharray="0 18.687"/>
      <path d="M378.500 913H460M378.500 2781.700H460" stroke="#35475f" stroke-dasharray="0 19.700"/>
      <path d="M2777.700 1136.300V2848" stroke="#000" stroke-dasharray="0 18.795"/>
    </g>
  </svg>
</div>
</body>
</html>
```
FILE: styles.css
```css
* { box-sizing: border-box; margin: 0; padding: 0; }
html { background: #fff; }
body { width: 4096px; height: 3072px; overflow: hidden; background: #fff; }
.defs { position: absolute; }

.page {
  position: relative;
  zoom: .95993;
  width: 4267px;
  height: 3200px;
  padding: 428px 376px 0 459px;
  font-family: "Open Sans", "Noto Sans", sans-serif;
  font-size: 32.3px;
  color: #404040;
  background: #fff;
}
b { font-weight: 600; }
i, em { font-style: normal; display: block; flex: none; }
svg { display: block; flex: none; }

.intro, .captions p { font-size: 70.8px; line-height: 85px; color: #000; white-space: nowrap; }
.intro { height: 252px; }
.intro b { font-family: Inter, "Open Sans", sans-serif; font-weight: 800; font-size: 65px; line-height: 1; letter-spacing: 1.5px; }

/* application window */
.window {
  width: 3432px;
  height: 1849px;
  border-radius: 12px;
  background: #fff;
  overflow: hidden;
  box-shadow: 16px 22px 60px rgba(70, 75, 100, .14);
}
.topbar {
  position: relative;
  z-index: 2;
  display: flex;
  height: 154px;
  padding-left: 50px;
  padding-right: 35px;
  border-bottom: 2.5px solid #e3e3ea;
  background: #fff;
  box-shadow: 0 3px 12px rgba(70, 75, 110, .16);
}
.back { width: 28px; height: 30px; margin-top: 59px; }
h1 { width: 674px; margin-left: 25px; margin-top: 28px; font-size: 59.1px; font-weight: 300; line-height: 84px; white-space: nowrap; }
.tabs { display: flex; gap: 60px; }
.tabs a { padding: 46px 7px 0; line-height: 46px; height: 152px; }
.tabs .active { font-weight: 600; border-bottom: 8px solid #6a8ae8; }
.actions { display: flex; gap: 22.5px; margin-left: auto; margin-top: 32px; }
.btn {
  width: 214px;
  height: 77px;
  border: 2.5px solid #e4e4ea;
  border-radius: 7px;
  background: #fafafc;
  font: inherit;
  letter-spacing: 2.4px;
  color: #404040;
}
.btn.share { border: 0; background: #008680; color: #fff; font-weight: 600; }
.btn.save { width: 215px; border: 0; background: #4d6fd3; color: #fff; font-weight: 600; letter-spacing: .6px; }

.body { display: grid; grid-template-columns: 750px 1617px 1065px; height: 1695px; }

/* left panel */
.left { border-right: 3px solid #e3e3ea; background: #fafafc; }
.map-title {
  display: flex;
  align-items: center;
  justify-content: space-between;
  height: 130px;
  padding: 0 43px 0 33px;
  border-bottom: 2.5px solid #e3e3ea;
  background: #fff;
  font-size: 48.3px;
  box-shadow: 0 3px 8px rgba(70, 75, 110, .06);
}
.map-title svg { width: 28px; height: 44px; }
.left-in { padding: 0 43px 0 38.5px; }
.layers-head { display: flex; align-items: center; justify-content: space-between; height: 126px; padding-top: 30px; }
.layers-head b { margin-top: -2px; }
.plus { width: 36px; height: 36px; fill: #e5e5eb; }
.ck { width: 32px; height: 32px; }
.tree { height: 846px; padding: 33px 0 0 27px; border: 2.5px solid #e4e4ea; background: #fff; }
.node { display: flex; align-items: center; height: 60px; }
.node.first { height: 58px; }
.node.mural { margin-top: 17px; }
.node.images { margin-top: 18px; }
.node .ck { margin: 0 16px 0 19px; }
.mural .ck { margin: 0 18px 0 11px; }
.images .ck { margin: 0 27px 0 27px; }
.down, .up, .right-caret { width: 0; height: 0; border: 9px solid transparent; }
.down { border-width: 11px 9.5px 0; border-top-color: #404040; }
.up { border-width: 0 11px 12px; border-bottom-color: #404040; }
.right-caret { border-width: 10px 0 10px 11px; border-left-color: #404040; }
.leaf { display: flex; align-items: center; height: 69.5px; padding-left: 62.5px; }
.leaf .x { margin: 0 23px 0 19px; }
.x { width: 30px; height: 30px; overflow: visible; }
.dot { width: 38px; height: 38px; margin: -5px 20px 0 17px; border-radius: 50%; }
.c1 { fill: #1f5999; } .c2 { fill: #2471b3; } .c3 { fill: #42b3e5; } .c4 { fill: #86d8f0; }
.d1 { background: #1f5999; } .d2 { background: #2471b3; } .d3 { background: #42b3e5; } .d4 { background: #86d8f0; }
.rule { height: 2.5px; background: #e4e4e8; }
.setting { display: flex; align-items: center; height: 155.5px; border-top: 2.5px solid #e4e4e8; }
.skin { justify-content: space-between; margin-top: 56px; }
.setting .up { margin-left: 17px; }

/* native-looking controls */
.select {
  display: flex;
  justify-content: space-between;
  height: 45px;
  border-radius: 8px;
  background: #fff;
  overflow: hidden;
  font-size: 31px;
  line-height: 47px;
  box-shadow: 0 0 0 1.5px #cfcfd3, 0 2px 2px rgba(0, 0, 0, .25);
}
.select > span { padding-left: 22px; }
.select > svg { width: 39px; height: 45px; background: linear-gradient(#6cb3fa, #077dff); }
.grey { width: 243px; font-size: 29px; line-height: 49px; margin-right: 1px; }
.w1 { width: 298px; } .w2 { width: 153px; } .w3 { width: 121px; }
.thin { width: 20px; height: 20px; margin: 14px 0 0 5px; }

.map svg { width: 1617px; height: 1695px; }
.land { fill: #e9e9e9; } .water { fill: #7dcdcc; } .park { fill: #c0e8e7; } .pale { fill: #dfefef; } .sand { fill: #efe0c9; }
.yel { fill: none; stroke: #dcecc4; stroke-width: 4; }
pattern path { stroke: #fff; stroke-width: 2.3; fill: none; }
.roads { fill: none; stroke: #fff; stroke-linejoin: round; }
.w26 { stroke-width: 25; } .w18 { stroke-width: 19; } .w16 { stroke-width: 16; } .w11 { stroke-width: 12; } .w8 { stroke-width: 8.5; } .w4 { stroke-width: 4; }
.lbl { font-family: Roboto, sans-serif; font-size: 34.5px; paint-order: stroke; stroke: rgba(255, 255, 255, .8); stroke-width: 5; stroke-linejoin: round; }
.it { font-style: italic; }
.marine { fill: #4b6a93; stroke: rgba(205, 238, 240, .75); }
.green { fill: #3d850f; }
.poi { fill: #444; }
.town { fill: #5d4a25; }
.city { font-size: 39px; font-weight: 500; stroke: #f5e8d4; }
.hood { fill: #967b56; font-size: 31px; font-weight: 500; }
.disc { fill: #fff; filter: drop-shadow(0 1.5px 1px rgba(0, 0, 0, .3)); }
.bus { fill: #0cb0fb; }
.busline { fill: none; stroke: #fff; stroke-width: 2; }
.bart { fill: #fff; stroke: #0ca0dc; stroke-width: 3; }
.b { fill: none; stroke: #000; stroke-width: 2; }
.a { fill: none; stroke: #0ca0dc; stroke-width: 2; }

/* right panel */
.right { display: flex; flex-direction: column; }
.scroll { height: 1532px; padding: 0 32px 0 43px; border-left: 2.5px solid #e3e3ea; background: #fafafc; }
.card { border: 2.5px solid #d6d7de; border-radius: 8px; background: #ecedf2; }
.rules { display: flex; height: 100px; padding: 18px 0 0 31px; border-top: 0; border-radius: 0 0 8px 8px; }
.rules .plus { margin-top: 6px; }
.rules u { margin-left: 1px; line-height: 48px; text-decoration-thickness: 2px; text-underline-offset: 5px; }
.rules + .rule { margin-top: 109px; }
.style-head { display: flex; align-items: center; height: 153px; }
.style-head .up { margin-left: 18px; }
.toggle { display: flex; width: 196px; height: 67px; margin: -33px 0 0 auto; border-radius: 8px; background: #fff; overflow: hidden; line-height: 66px; text-align: center; }
.toggle span { width: 87px; }
.toggle .on { width: 109px; background: #7a99e0; color: #fff; font-weight: 500; }
.form {
  display: grid;
  grid-template-columns: 319px auto;
  grid-auto-rows: 83px;
  column-gap: 27px;
  align-items: center;
  justify-content: start;
  height: 490px;
  margin-top: 22px;
  padding-top: 31px;
}
.form label { text-align: right; padding-top: 8px; }
.number { display: flex; align-items: center; justify-content: space-between; width: 105px; height: 55px; margin-top: 2px; padding: 0 10px 0 6px; border: 2px solid #c4c4c8; background: #fff; font-size: 30px; color: #999; }
.number svg { width: 22px; height: 38px; }
.ramp { display: flex; width: 400px; height: 44px; margin-top: 7px; border: 4.5px solid; border-color: #747474 #f2f2f2 #f2f2f2 #747474; }
.bar { flex: 1; background: linear-gradient(90deg, #0c579b, #1663a8 50%, #0a6fb3); }
.drop { display: flex; align-items: center; justify-content: center; width: 40px; background: #ececec; border: 3px solid; border-color: #fff #777 #777 #fff; }
.drop i { border: 9px solid transparent; border-top: 10px solid #000; border-bottom: 0; }
.legend-title { margin-top: 54px; height: 62px; line-height: 46px; }
.legend { height: 424px; border: 2.5px solid #e4e4ea; background: #fff; }
.lr { display: grid; grid-template-columns: 50px 104px 258px 303px auto; align-items: center; height: 85px; padding-left: 29px; border-top: 2.5px solid #e4e4e6; }
.lr.lh { height: 79px; border-top: 0; }
.pill { display: flex; width: 129px; height: 58px; border: 2.5px solid #e4e4ec; border-radius: 14px; overflow: hidden; font-size: 29px; line-height: 54px; }
.pill span { width: 71px; padding-left: 14px; border-right: 2px solid #e4e4ec; }
.pill em { flex: 1; }
.rule.last { margin-top: 54px; }
.save-bar { flex: 1; display: flex; justify-content: flex-end; padding: 38px 45px 0 0; border-top: 2.5px solid #e3e3e8; background: #fff; }

/* annotations */
.captions { display: grid; grid-template-columns: 2295px auto; margin: 169px 0 0 66px; }
.callouts { position: absolute; left: 0; top: 0; width: 4267px; height: 3200px; }
```
